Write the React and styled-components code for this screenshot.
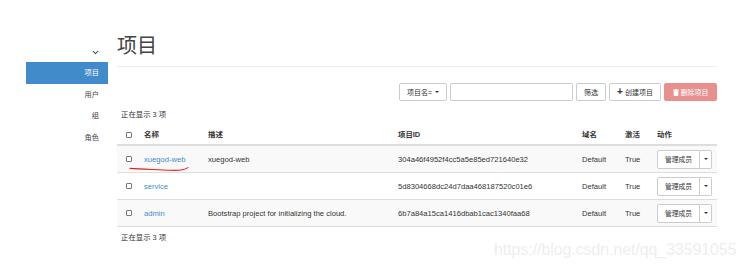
import React from 'react';
import styled, { createGlobalStyle } from 'styled-components';
import { ChevronDown } from 'lucide-react';

const GlobalStyle = createGlobalStyle`
    html, body {
        margin: 0;
        padding: 0;
        background: #fff;
    }
    body {
        font-family: "Liberation Sans", "Noto Sans CJK SC", sans-serif;
        font-size: 7.6px;
        color: #333;
    }
`;

const projects = [
    { name: 'xuegod-web', desc: 'xuegod-web', id: '304a46f4952f4cc5a5e85ed721640e32', marked: true },
    { name: 'service', desc: '', id: '5d8304668dc24d7daa468187520c01e6' },
    { name: 'admin', desc: 'Bootstrap project for initializing the cloud.', id: '6b7a84a15ca1416dbab1cac1340faa68' },
];

export default function App() {
    return (
        <>
            <GlobalStyle />
            <Page>
                <Sidebar>
                    <Toggle>
                        <ChevronDown size={9} strokeWidth={3} />
                    </Toggle>
                    <NavItem $active>项目</NavItem>
                    <NavItem>用户</NavItem>
                    <NavItem>组</NavItem>
                    <NavItem>角色</NavItem>
                </Sidebar>

                <Main>
                    <Title>项目</Title>

                    <Toolbar>
                        <Button $w={48}>项目名= <Caret /></Button>
                        <SearchInput />
                        <Button $w={30}>筛选</Button>
                        <Button $w={52}><Plus>+</Plus>创建项目</Button>
                        <Button $w={53} $danger>
                            <svg width="6" height="7" viewBox="0 0 6 7">
                                <rect x="0" y="0.6" width="6" height="1.1" fill="#fff" />
                                <rect x="2" y="0" width="2" height="1" fill="#fff" />
                                <rect x="0.7" y="2.1" width="4.6" height="4.9" rx="0.5" fill="#fff" />
                            </svg>
                            删除项目
                        </Button>
                    </Toolbar>

                    <Count>正在显示 3 项</Count>

                    <Table>
                        <colgroup>
                            <col style={{ width: 23 }} />
                            <col style={{ width: 64 }} />
                            <col style={{ width: 190 }} />
                            <col style={{ width: 184 }} />
                            <col style={{ width: 43 }} />
                            <col style={{ width: 32 }} />
                            <col style={{ width: 64 }} />
                        </colgroup>
                        <thead>
                            <tr>
                                <Th $check><Check /></Th>
                                <Th>名称</Th>
                                <Th>描述</Th>
                                <Th>项目ID</Th>
                                <Th>域名</Th>
                                <Th>激活</Th>
                                <Th>动作</Th>
                            </tr>
                        </thead>
                        <tbody>
                            {projects.map((p, i) => (
                                <Row key={p.id} $striped={i % 2 === 0}>
                                    <Td $check><Check /></Td>
                                    <Td>
                                        <Link>{p.name}</Link>
                                        {p.marked && (
                                            <Mark width="62" height="6" viewBox="0 0 62 6">
                                                <path
                                                    d="M1 2.4 C 14 3.2, 30 3.6, 42 4.3 C 50 4.7, 56 3.6, 59 1.6"
                                                    fill="none"
                                                    stroke="#e3201c"
                                                    strokeWidth="1.1"
                                                    strokeLinecap="round"
                                                />
                                            </Mark>
                                        )}
                                    </Td>
                                    <Td>{p.desc}</Td>
                                    <Td>{p.id}</Td>
                                    <Td>Default</Td>
                                    <Td>True</Td>
                                    <Td>
                                        <SplitGroup>
                                            <SplitMain>管理成员</SplitMain>
                                            <SplitCaret><Caret /></SplitCaret>
                                        </SplitGroup>
                                    </Td>
                                </Row>
                            ))}
                        </tbody>
                    </Table>

                    <Count $footer>正在显示 3 项</Count>
                </Main>

                <Watermark>https://blog.csdn.net/qq_33591055</Watermark>
            </Page>
        </>
    );
}

const Page = styled.div`
    position: relative;
    display: flex;
    width: 746px;
    height: 269px;
    overflow: hidden;
`;

const Sidebar = styled.nav`
    display: flex;
    flex-direction: column;
    width: 82px;
    margin-left: 26px;
    padding-top: 42px;
`;

const Toggle = styled.div`
    display: flex;
    justify-content: flex-end;
    align-items: center;
    height: 20px;
    padding-right: 8px;
    color: #555;
`;

const NavItem = styled.div`
    height: 21.5px;
    line-height: 21.5px;
    padding-right: 9px;
    text-align: right;
    font-size: 7.2px;
    color: ${p => (p.$active ? '#fff' : '#444')};
    background: ${p => (p.$active ? '#428bca' : 'transparent')};
`;

const Main = styled.main`
    display: flex;
    flex-direction: column;
    width: 600px;
    margin-left: 9px;
    padding-top: 34px;
`;

const Title = styled.h1`
    margin: 0;
    font-size: 20px;
    line-height: 24px;
    font-weight: 400;
    color: #444;
    padding-bottom: 8px;
    border-bottom: 1px solid #eee;
`;

const Toolbar = styled.div`
    display: flex;
    justify-content: flex-end;
    gap: 3px;
    margin-top: 16px;
    height: 18px;
`;

const Button = styled.div`
    box-sizing: border-box;
    display: flex;
    align-items: center;
    justify-content: center;
    gap: 2px;
    width: ${p => p.$w}px;
    height: 18px;
    font-size: 7px;
    border-radius: 2px;
    border: 1px solid ${p => (p.$danger ? '#e8908e' : '#ccc')};
    background: ${p => (p.$danger ? '#e8908e' : '#fff')};
    color: ${p => (p.$danger ? '#fff' : '#333')};
`;

const Plus = styled.span`
    font-size: 10px;
    font-weight: 700;
    line-height: 1;
    margin-top: -1px;
`;

const Caret = styled.span`
    display: inline-block;
    width: 0;
    height: 0;
    margin-left: 1px;
    border-left: 2.5px solid transparent;
    border-right: 2.5px solid transparent;
    border-top: 2.5px solid #333;
`;

const SearchInput = styled.div`
    box-sizing: border-box;
    width: 123px;
    height: 18px;
    border: 1px solid #ccc;
    border-radius: 2px;
`;

const Count = styled.div`
    margin-top: ${p => (p.$footer ? 4 : 7)}px;
    padding-left: 4px;
    line-height: 14px;
    font-size: 7.4px;
`;

const Table = styled.table`
    width: 600px;
    table-layout: fixed;
    border-collapse: collapse;
`;

const Th = styled.th`
    padding: 8px 0 4px ${p => (p.$check ? 9 : 4)}px;
    line-height: 10px;
    text-align: left;
    font-weight: 700;
    font-size: 7.4px;
    border-bottom: 2px solid #ddd;
`;

const Row = styled.tr`
    background: ${p => (p.$striped ? '#f9f9f9' : '#fff')};
`;

const Td = styled.td`
    position: relative;
    height: 26px;
    padding: 0 0 0 ${p => (p.$check ? 9 : 4)}px;
    vertical-align: middle;
    white-space: nowrap;
    border-bottom: 1px solid #ddd;
`;

const Check = styled.span`
    display: block;
    box-sizing: border-box;
    width: 6px;
    height: 6px;
    border: 1px solid #777;
    border-radius: 1px;
    background: #fff;
`;

const Link = styled.span`
    color: #428bca;
`;

const Mark = styled.svg`
    position: absolute;
    left: -11px;
    top: 20px;
`;

const SplitGroup = styled.div`
    display: flex;
    width: 55px;
    height: 19px;
`;

const SplitMain = styled.div`
    box-sizing: border-box;
    display: flex;
    align-items: center;
    justify-content: center;
    width: 43px;
    height: 100%;
    font-size: 6.8px;
    background: #fff;
    border: 1px solid #ccc;
    border-radius: 2px 0 0 2px;
`;

const SplitCaret = styled.div`
    box-sizing: border-box;
    display: flex;
    align-items: center;
    justify-content: center;
    width: 12px;
    height: 100%;
    background: #fff;
    border: 1px solid #ccc;
    border-left: none;
    border-radius: 0 2px 2px 0;
`;

const Watermark = styled.div`
    position: absolute;
    left: 494px;
    top: 240px;
    font-size: 15.8px;
    line-height: 20px;
    color: #eeeeee;
    white-space: nowrap;
`;
